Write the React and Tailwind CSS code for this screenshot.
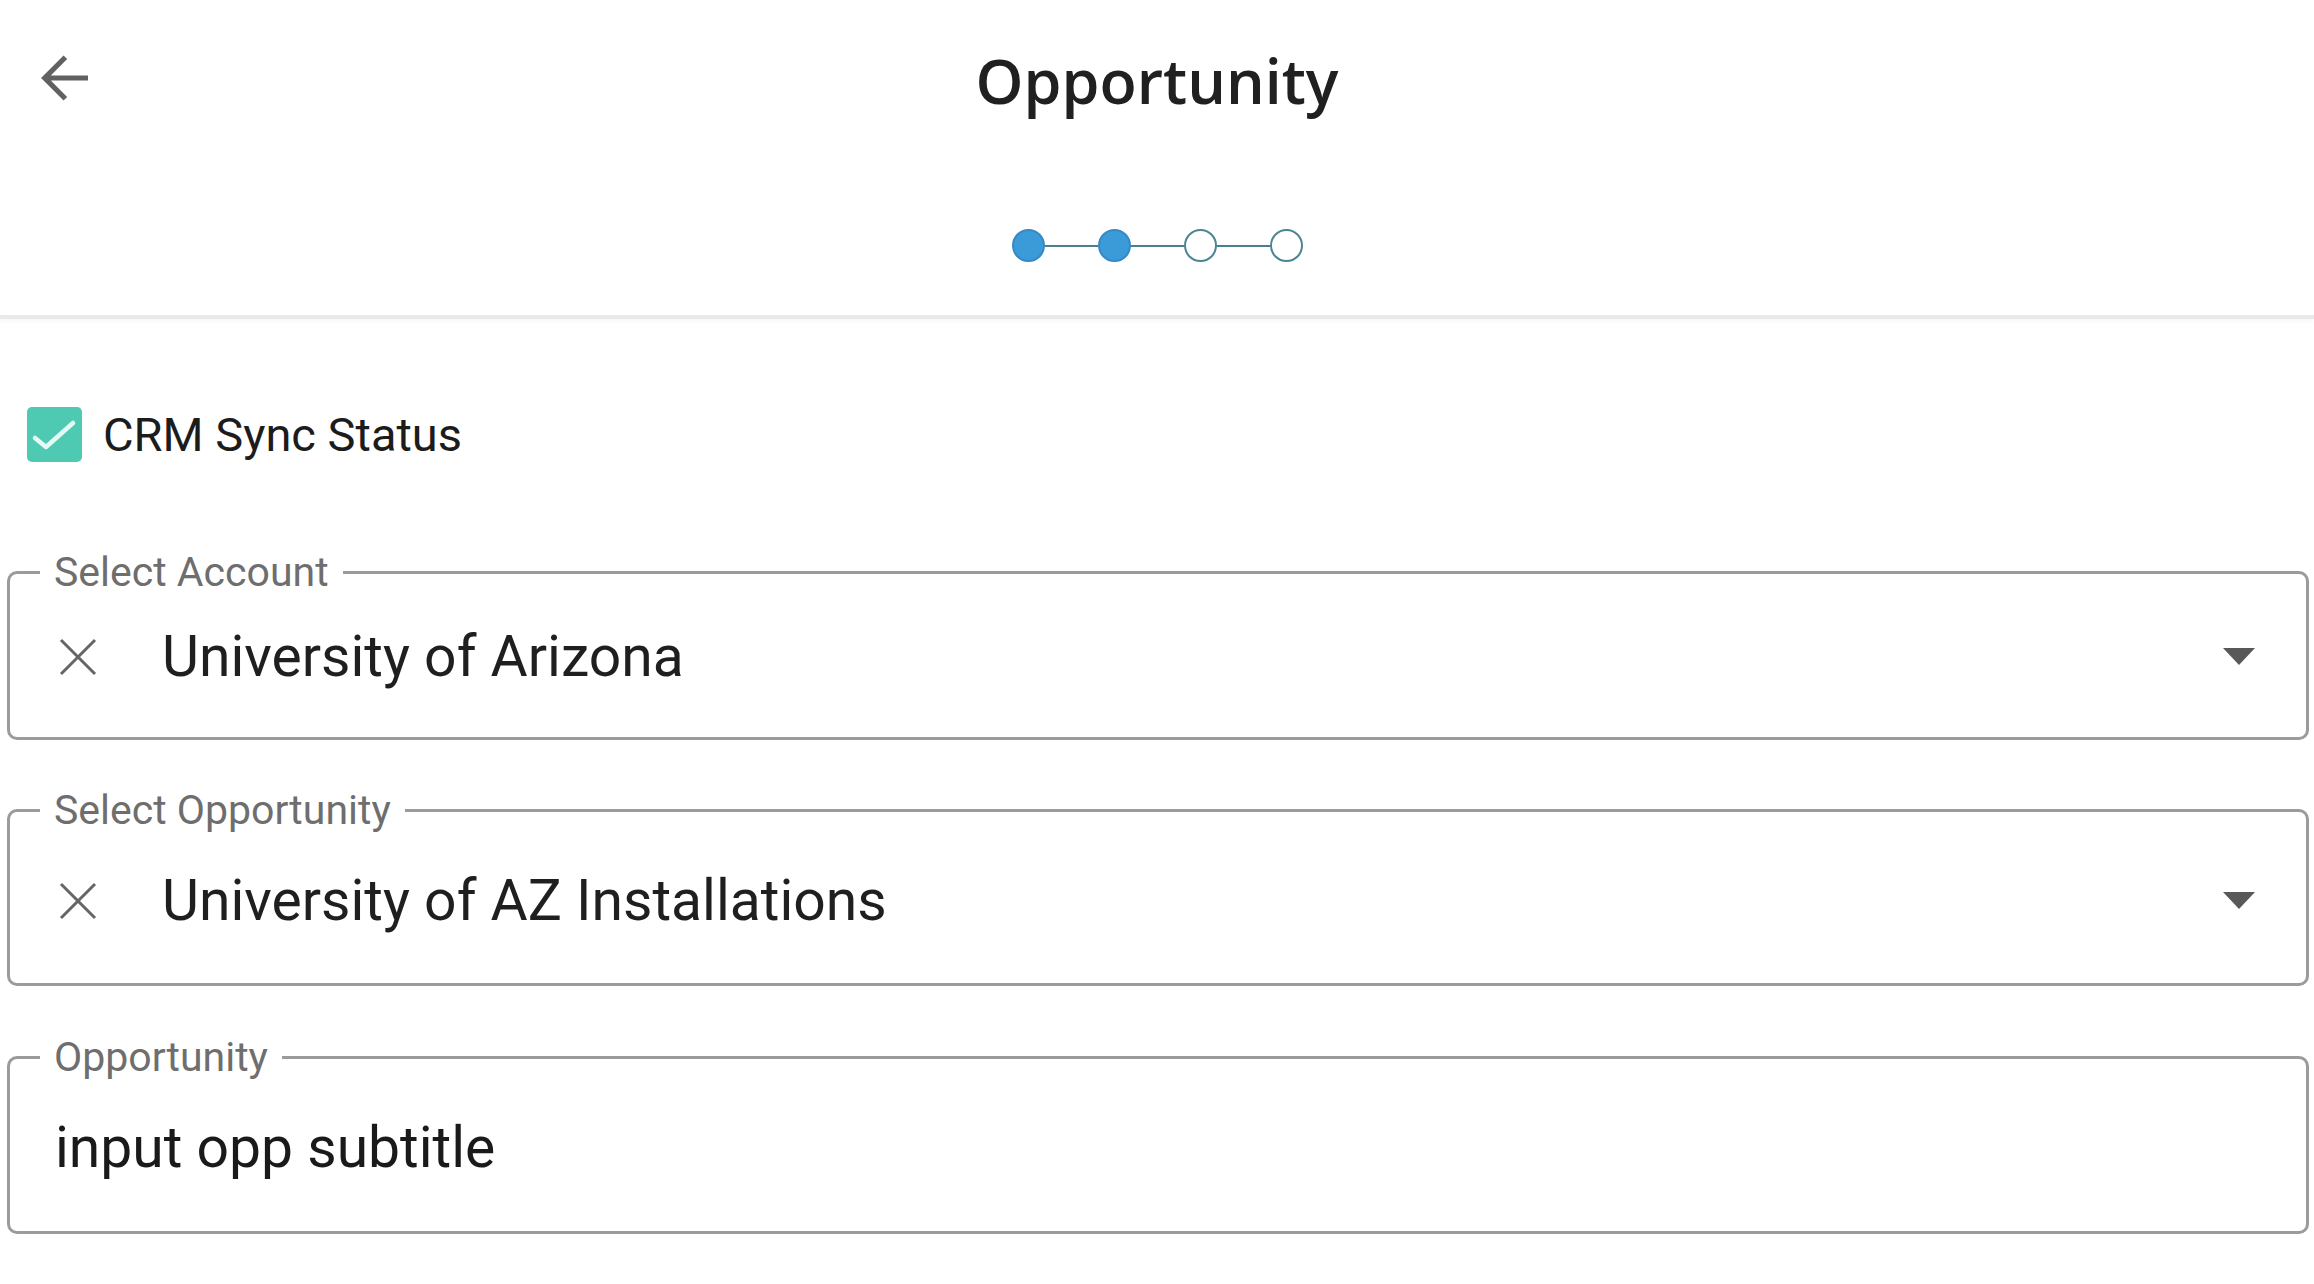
import React from "react";

function BackArrow() {
  return (
    <svg width="72" height="72" viewBox="0 0 24 24" fill="#616161">
      <path d="M20 11.15H7.6l5.45-5.45-1.2-1.2L4.35 12l7.5 7.5 1.2-1.2-5.45-5.45H20z" />
    </svg>
  );
}

function ClearIcon() {
  return (
    <svg width="38" height="38" viewBox="0 0 38 38" stroke="#666" strokeWidth="3" fill="none">
      <path d="M2 2 36 36M36 2 2 36" />
    </svg>
  );
}

function DropArrow() {
  return (
    <svg width="32" height="17" viewBox="0 0 32 17" fill="#585858">
      <path d="M0 0h32L16 17z" />
    </svg>
  );
}

function Step({ done }) {
  return done ? (
    <div className="w-[33px] h-[33px] rounded-full bg-[#3b9ad8] border-2 border-[#3589c4]" />
  ) : (
    <div className="w-[33px] h-[33px] rounded-full bg-white border-[2.5px] border-[#4b8593]" />
  );
}

function Line() {
  return <div className="w-[53px] h-[2px] bg-[#4b7f8c]" />;
}

function SelectField({ label, value, className, boxClass }) {
  return (
    <fieldset className={`border-[3px] border-[#9b9b9b] rounded-[10px] ${className}`}>
      <legend className="ml-[30px] px-[14px] text-[41px] leading-[40px] text-[#6e6e6e]">
        {label}
      </legend>
      <div className={`flex items-center pl-[49px] pr-[51px] ${boxClass}`}>
        <ClearIcon />
        <span className="ml-[65px] flex-1 text-[57px] leading-none text-[#1f1f1f]">{value}</span>
        <DropArrow />
      </div>
    </fieldset>
  );
}

export default function App() {
  return (
    <div className="w-full min-h-screen bg-white font-['Roboto',sans-serif]">
      {/* Header */}
      <header className="border-b-[4px] border-[#e9e9e9] pt-[50px] pb-[53px] shadow-[0_3px_5px_rgba(0,0,0,0.03)]">
        <div className="grid grid-cols-[1fr_auto_1fr] items-start">
          <div className="pl-[28px] -mt-[8px]">
            <BackArrow />
          </div>
          <h1 className="font-['Open_Sans',sans-serif] font-semibold text-[61px] leading-[62px] h-[62px] text-[#202020]">
            Opportunity
          </h1>
          <div />
        </div>

        {/* Stepper */}
        <div className="mt-[115px] flex justify-center items-center">
          <Step done />
          <Line />
          <Step done />
          <Line />
          <Step />
          <Line />
          <Step />
        </div>
      </header>

      {/* Form */}
      <main className="pl-[7px] pr-[5px] pt-[88px] pb-[40px]">
        <label className="flex items-center h-[55px] pl-[20px]">
          <div className="w-[55px] h-[55px] rounded-[5px] bg-[#4fcab2] flex items-center justify-center">
            <svg width="55" height="55" viewBox="0 0 55 55" fill="none" stroke="#e6faf5" strokeWidth="4.5" strokeLinecap="round" strokeLinejoin="round">
              <path d="M8 31l11 9 27-24" />
            </svg>
          </div>
          <span className="ml-[21px] text-[47px] leading-none text-[#1c1c1c]">CRM Sync Status</span>
        </label>

        <SelectField
          label="Select Account"
          value="University of Arizona"
          className="mt-[90px]"
          boxClass="h-[145px] pb-[16px]"
        />
        <SelectField
          label="Select Opportunity"
          value="University of AZ Installations"
          className="mt-[50px]"
          boxClass="h-[153px] pb-[12px]"
        />

        <fieldset className="mt-[51px] border-[3px] border-[#9b9b9b] rounded-[10px]">
          <legend className="ml-[30px] px-[14px] text-[41px] leading-[40px] text-[#6e6e6e]">
            Opportunity
          </legend>
          <div className="h-[154px] pb-[14px] flex items-center pl-[45px]">
            <span className="text-[57px] leading-none text-[#1a1a1a]">input opp subtitle</span>
          </div>
        </fieldset>
      </main>
    </div>
  );
}
